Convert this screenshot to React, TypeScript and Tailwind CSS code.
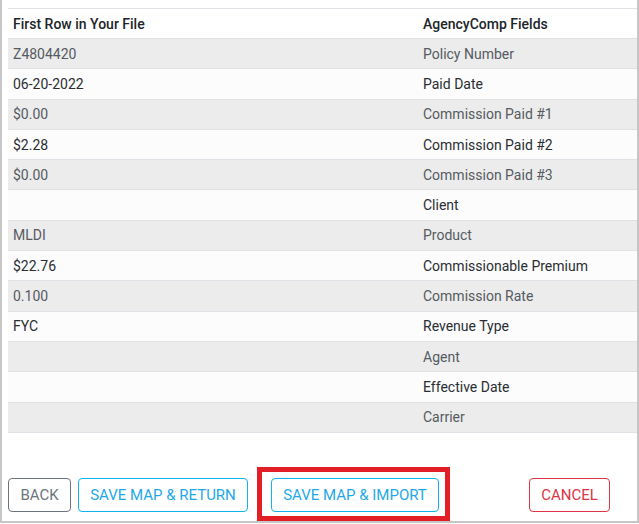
import React from "react";

const rows: [string, string][] = [
  ["Z4804420", "Policy Number"],
  ["06-20-2022", "Paid Date"],
  ["$0.00", "Commission Paid #1"],
  ["$2.28", "Commission Paid #2"],
  ["$0.00", "Commission Paid #3"],
  ["", "Client"],
  ["MLDI", "Product"],
  ["$22.76", "Commissionable Premium"],
  ["0.100", "Commission Rate"],
  ["FYC", "Revenue Type"],
  ["", "Agent"],
  ["", "Effective Date"],
  ["", "Carrier"],
];

const App = () => {
  return (
    <div className="w-[639px] h-[523px] bg-white border-x-2 border-b-2 border-[#c6c6c6] font-['Roboto',sans-serif] text-[14px]">
      <div className="pl-[6px] pt-[8px]">
        {/* Header */}
        <div className="flex h-[30px] pt-[1px] items-center border-t border-[#dee2e6] text-[#212529] font-medium">
          <div className="w-[410px] pl-[5px]">First Row in Your File</div>
          <div className="flex-1 pl-[5px]">AgencyComp Fields</div>
        </div>

        {/* Rows */}
        {rows.map(([value, field], i) => (
          <div
            key={field}
            className={
              i % 2 === 0
                ? "flex h-[30.3px] pt-[1px] items-center border-t border-[#dee2e6] bg-[#ececec] text-[#555b61]"
                : "flex h-[30.3px] pt-[1px] items-center border-t border-[#dee2e6] bg-[#fcfcfc] text-[#2a2e33]"
            }
          >
            <div className="w-[410px] pl-[5px]">{value}</div>
            <div className="flex-1 pl-[5px]">{field}</div>
          </div>
        ))}
        <div className="border-t border-[#dee2e6]" />

        {/* Buttons */}
        <div className="flex items-center mt-[45px] text-[15px]">
          <button className="w-[63px] h-[34px] flex items-center justify-center border border-[#6c757d] text-[#6c757d] rounded-[4px] bg-white uppercase">
            Back
          </button>
          <button className="ml-[7px] w-[170px] h-[34px] flex items-center justify-center border border-[#12b2ef] text-[#1ea9e6] rounded-[4px] bg-white uppercase">
            Save Map &amp; Return
          </button>
          <div className="relative ml-[23px]">
            <button className="w-[168px] h-[34px] flex items-center justify-center border border-[#12b2ef] text-[#1ea9e6] rounded-[4px] bg-white uppercase">
              Save Map &amp; Import
            </button>
            <div className="absolute left-[-14px] top-[-11px] right-[-11px] bottom-[-9px] border-[5px] border-[#e41e26] pointer-events-none" />
          </div>
          <button className="ml-[90px] w-[81px] h-[34px] flex items-center justify-center border border-[#dc3545] text-[#dc3545] rounded-[4px] bg-white uppercase">
            Cancel
          </button>
        </div>
      </div>
    </div>
  );
};

export default App;
